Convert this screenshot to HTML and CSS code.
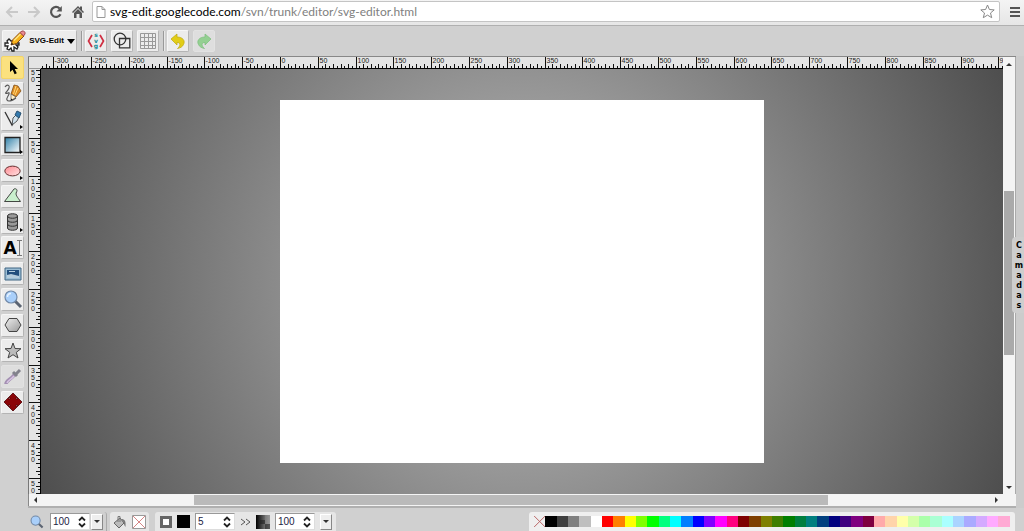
FILE: index.html
```html
<!DOCTYPE html>
<html lang="pt">
<head>
<meta charset="utf-8">
<title>SVG-Edit</title>
<link rel="stylesheet" href="styles.css">
</head>
<body>
<header class="browser-bar">
  <button class="nav-btn" aria-label="Back"><svg width="14" height="12" viewBox="0 0 14 12" fill="none" stroke="#c9c9c9" stroke-width="2"><path d="M13 6H2M7 1L2 6l5 5"/></svg></button>
  <button class="nav-btn" aria-label="Forward"><svg width="14" height="12" viewBox="0 0 14 12" fill="none" stroke="#c9c9c9" stroke-width="2"><path d="M1 6h11M7 1l5 5-5 5"/></svg></button>
  <button class="nav-btn" aria-label="Reload"><svg width="14" height="14" viewBox="0 0 14 14"><path d="M11.5 9.2A5 5 0 1 1 10.6 3.4" fill="none" stroke="#555" stroke-width="2.2"/><path d="M12.8 1v5.4H7.4z" fill="#555"/></svg></button>
  <button class="nav-btn" aria-label="Home"><svg width="14" height="14" viewBox="0 0 14 14"><path d="M7 1L1 7l1 1 5-5 5 5 1-1-2-2V1.500H9V3z" fill="#555"/><path d="M3 8l4-4 4 4v5H8.500V9h-3v4H3z" fill="#555"/></svg></button>
  <form class="address">
    <svg width="10" height="12" viewBox="0 0 10 12" fill="#fff" stroke="#999"><path d="M1 .5h5l3 3v8H1zM6 .5v3h3"/></svg>
    <div class="url" role="textbox" aria-label="Address" contenteditable="true">svg-edit.googlecode.com<span class="url-path">/svn/trunk/editor/svg-editor.html</span></div>
    <svg width="15" height="15" viewBox="0 0 15 15" fill="#fff" stroke="#888"><path d="M7.500 1l1.900 4.500 4.800.4-3.700 3.100 1.200 4.700-4.200-2.600-4.200 2.600 1.200-4.700L.8 5.900l4.800-.4z"/></svg>
  </form>
  <button class="nav-btn menu-btn" aria-label="Menu"><svg width="10" height="10" viewBox="0 0 10 10" fill="#555"><path d="M0 0h10v2H0zM0 4h10v2H0zM0 8h10v2H0z"/></svg></button>
</header>

<div class="top-tools">
  <button class="tool main-menu">
    <svg width="22" height="22" viewBox="0 0 22 22"><g fill="#fff" stroke="#222" stroke-width="1.300"><path d="M7 11L5 9 3 11l1 2H1v3h3l-1 3 2 1 2-2 1 3h2v-4l3 2 1-2-2-2h3v-2h-4l1-2z"/></g><path d="M7 15l1.500-5L16 2.500l4 3.500-7.500 7.500z" fill="#f6b21b" stroke="#8d4a12"/><path d="M16 2.500L18 1c2-.3 3.500 1 3 3l-1.500 2z" fill="#e98a91" stroke="#a2474e"/><path d="M10 10.500L16.500 4" stroke="#ffe786" stroke-width="1.500"/><path d="M7 15l.7-2.500 1.800 1.700z" fill="#222"/></svg>
    <span>SVG-Edit</span>
    <svg width="8" height="5" viewBox="0 0 8 5"><path d="M0 0h8L4 5z"/></svg>
  </button>
  <span class="separator"></span>
  <button class="tool" aria-label="Edit source"><svg width="18" height="18" viewBox="0 0 18 18"><path d="M5 3L1.500 9 5 15M13 3l3.500 6-3.500 6" fill="none" stroke="#cf2f42" stroke-width="1.700"/><g class="source-letters"><text x="9" y="5">s</text><text x="9" y="11">v</text><text x="9" y="16">g</text></g></svg></button>
  <button class="tool" aria-label="Wireframe"><svg width="18" height="18" viewBox="0 0 18 18" fill="none" stroke="#333" stroke-width="1.300"><circle cx="7" cy="7" r="5.800"/><path d="M6.500 6.500h10.300v9.300H6.500z"/></svg></button>
  <button class="tool" aria-label="Grid"><svg width="18" height="18" viewBox="0 0 18 18" fill="none" stroke="#999"><path d="M1.500 1.500h15v15h-15zM1.500 5.500h15M1.500 9.500h15M1.500 13.500h15M5.500 1.500v15M9.500 1.500v15M13.500 1.500v15"/></svg></button>
  <span class="separator"></span>
  <button class="tool" aria-label="Undo"><svg width="18" height="18" viewBox="0 0 18 18"><path d="M2 7l6-5v3c6 0 8.500 4 6.500 7.500C13.500 15 11 16 8.500 16.500c2.500-2 4-6-.5-6V13z" fill="#e2cd17" stroke="#bda80b" stroke-width=".7"/></svg></button>
  <button class="tool disabled" aria-label="Redo" disabled><svg width="18" height="18" viewBox="0 0 18 18"><path d="M16 7l-6-5v3C4 5 1.500 9 3.500 12.500 4.500 15 7 16 9.500 16.500c-2.500-2-4-6 .5-6V13z" fill="#94d092" stroke="#7bbd7b" stroke-width=".7"/></svg></button>
</div>

<main class="editor">
  <nav class="tools-left" aria-label="Tools">
    <button class="tool active" aria-label="Select"><svg width="20" height="20" viewBox="0 0 20 20"><path d="M7 3v11l2.600-2.200 2 4.500 2.200-1-2.100-4.300H15z"/></svg></button>
    <button class="tool" aria-label="Pencil"><svg width="20" height="20" viewBox="0 0 20 20"><path d="M8 11l3-9 4 1 3 5-5 6z" fill="#df8d22" stroke="#80501a" stroke-width=".8"/><path d="M13 3l-2.500 8M15 5l-3 7" stroke="#ffda7b"/><path d="M8 11l5 3-5 4z" fill="#fff0c8" stroke="#444" stroke-width=".6"/><path d="M8 18v-2.500l1.800 1.200z"/><path d="M2 4c2-3 5-2 4 1S1.500 10 3 10.500 7 8 6 11s-3 4-2 6 5 1 9-2" fill="none" stroke="#555" stroke-width="1.100"/></svg></button>
    <button class="tool flyout" aria-label="Path"><svg width="20" height="20" viewBox="0 0 20 20"><path d="M2 3l7 13 4-8" fill="none" stroke="#333" stroke-width="1.300"/><path d="M9 16l1-7 3-3 3 2-2 4z" fill="#d2e3ed" stroke="#333" stroke-width=".8"/><path d="M12 6l2-4 4 2-2 5z" fill="#347aae" stroke="#285170"/></svg></button>
    <button class="tool flyout" aria-label="Rectangle"><svg width="20" height="20" viewBox="0 0 20 20"><defs><linearGradient id="blue" x2="1" y2="1"><stop stop-color="#2f80a8"/><stop offset="1" stop-color="#fff"/></linearGradient></defs><path d="M2 2.500h15v15H2z" fill="url(#blue)" stroke="#222" stroke-width="1.300"/></svg></button>
    <button class="tool flyout" aria-label="Ellipse"><svg width="20" height="20" viewBox="0 0 20 20"><defs><linearGradient id="pink" x2="1" y2="1"><stop stop-color="#ff8a91"/><stop offset="1" stop-color="#ffe3e4"/></linearGradient></defs><ellipse cx="9.500" cy="10" rx="7.700" ry="4.900" fill="url(#pink)" stroke="#633"/></svg></button>
    <button class="tool" aria-label="Polygon path"><svg width="20" height="20" viewBox="0 0 20 20"><path d="M1.500 15.500L11 3c2-1 4 1 2.500 3-1.500 3 1 5 4 9.500z" fill="#c9efcd" stroke="#424742"/></svg></button>
    <button class="tool flyout" aria-label="Shape library"><svg width="20" height="20" viewBox="0 0 20 20"><path d="M4.500 4v12c0 3 10 3 10 0V4c0-3-10-3-10 0z" fill="#999" stroke="#333"/><path d="M4.500 4c0 3 10 3 10 0M4.500 8c0 3 10 3 10 0M4.500 12c0 3 10 3 10 0" fill="none" stroke="#333"/></svg></button>
    <button class="tool" aria-label="Text"><span class="text-icon">A</span><svg width="5" height="16" viewBox="0 0 5 16" fill="none" stroke="#777"><path d="M0 .5h5M2.500 .5v15M0 15.500h5"/></svg></button>
    <button class="tool" aria-label="Image"><svg width="20" height="20" viewBox="0 0 20 20"><path d="M2 4h16v12H2z" fill="#9bbdd4" stroke="#416784"/><path d="M4 6h12v8H4z" fill="#234f7d"/><path d="M4 11l4-1 8 2v2H4zM6 7h6v1H6z" fill="#b6cddd"/></svg></button>
    <button class="tool" aria-label="Zoom"><svg width="20" height="20" viewBox="0 0 20 20"><path d="M12 12l6 6" stroke="#5b6472" stroke-width="3"/><circle cx="8" cy="8" r="6" fill="#a9cffa" stroke="#7189a8" stroke-width="1.200"/><path d="M4.500 8c0-2 1.500-3.500 3.500-3.500" fill="none" stroke="#e5f2ff" stroke-width="1.500"/></svg></button>
    <button class="tool" aria-label="Polygon"><svg width="20" height="20" viewBox="0 0 20 20"><defs><linearGradient id="gray" x2="1" y2="1"><stop stop-color="#eee"/><stop offset="1" stop-color="#999"/></linearGradient></defs><path d="M6 3.500h8l4 6.500-4 6.500H6L2 10z" fill="url(#gray)" stroke="#444"/></svg></button>
    <button class="tool" aria-label="Star"><svg width="20" height="20" viewBox="0 0 20 20"><path d="M10 2l2 5.500 6 .2-4.700 3.600L15 17l-5-3.300L5 17l1.700-5.700L2 7.700l6-.2z" fill="#bbb" stroke="#444"/></svg></button>
    <button class="tool disabled" aria-label="Eyedropper" disabled><svg width="20" height="20" viewBox="0 0 20 20"><path d="M3 17c0-4 5-4 9-10" fill="none" stroke="#a490b3" stroke-width="3.500"/><path d="M4 16c1-3 4-3 7-7" fill="none" stroke="#d7c4e2" stroke-width="1.500"/><path d="M10 5l4 4M13 7l4-4" stroke="#82828c" stroke-width="3"/></svg></button>
    <button class="tool" aria-label="Move"><svg width="20" height="20" viewBox="0 0 20 20"><path d="M10 1l4.500 4.500H13V7h1.500V5.500L19 10l-4.500 4.500V13H13v1.500h1.500L10 19l-4.500-4.500H7V13H5.500v1.500L1 10l4.500-4.500V7H7V5.500H5.500z" fill="#8b0508" stroke="#510306" stroke-width=".8"/></svg></button>
  </nav>

  <section class="workspace">
    <div class="ruler-corner"></div>
    <svg class="ruler ruler-x" aria-hidden="true"></svg>
    <svg class="ruler ruler-y" aria-hidden="true"></svg>
    <div class="stage"><div class="page"></div></div>
    <div class="scroll scroll-y"><i class="arrow up"></i><div class="track"><div class="thumb"></div></div><i class="arrow down"></i></div>
    <div class="scroll scroll-x"><i class="arrow left"></i><div class="track"><div class="thumb"></div></div><i class="arrow right"></i></div>
  </section>

  <aside class="side"><button class="layers-tab"><span>C</span><span>a</span><span>m</span><span>a</span><span>d</span><span>a</span><span>s</span></button></aside>
</main>

<footer class="bottom">
  <div class="group zoom-group">
    <label for="zoom" aria-label="Zoom"><svg width="14" height="14" viewBox="0 0 20 20"><path d="M12 12l6 6" stroke="#5b6472" stroke-width="3"/><circle cx="8" cy="8" r="6.500" fill="#a9cffa" stroke="#7189a8" stroke-width="1.500"/></svg></label>
    <div class="spin"><input id="zoom" value="100"><svg width="8" height="12" viewBox="0 0 8 12" fill="none" stroke="#222" stroke-width="1.800"><path d="M1 4.500l3-3 3 3M1 7.500l3 3 3-3"/></svg></div>
    <button class="drop" aria-label="Zoom levels"><i class="arrow down"></i></button>
  </div>
  <div class="group fill-group">
    <svg width="14" height="14" viewBox="0 0 14 14"><path d="M1 8l6-5 4 5-5 5z" fill="#bbb" stroke="#666"/><path d="M5 7V1.500h2V7" fill="none" stroke="#777"/><path d="M8 4c4 0 5 2 4.500 8-1-1-1.500-3-2-5z" fill="#777"/></svg>
    <button class="paint" aria-label="Fill colour"><svg width="14" height="14" viewBox="0 0 14 14"><path d="M.5 .5h13v13H.5z" fill="#fff" stroke="#999"/><path d="M1 1l12 12M13 1L1 13" stroke="#c66" stroke-width=".8"/></svg></button>
  </div>
  <div class="group stroke-group">
    <svg width="12" height="12" viewBox="0 0 12 12"><path d="M1.500 1.500h9v9h-9z" fill="#fff" stroke="#666" stroke-width="3"/></svg>
    <button class="paint black" aria-label="Stroke colour"></button>
    <div class="spin"><input aria-label="Stroke width" value="5"><svg width="8" height="12" viewBox="0 0 8 12" fill="none" stroke="#222" stroke-width="1.800"><path d="M1 4.500l3-3 3 3M1 7.500l3 3 3-3"/></svg></div>
    <button class="paint more" aria-label="More stroke options"><svg width="11" height="8" viewBox="0 0 11 8" fill="none" stroke="#555"><path d="M1 1l4 3-4 3M6 1l4 3-4 3"/></svg></button>
    <svg width="14" height="14" viewBox="0 0 14 14"><defs><linearGradient id="opacity" x2="1" y2="0"><stop stop-color="#000"/><stop offset="1" stop-color="#aaa"/></linearGradient></defs><path d="M0 0h14v14H0z" fill="url(#opacity)"/><path d="M5 0h9v5H9V0zM9 5h5v5H9z" fill="#888" fill-opacity=".5"/><path d="M4 5h5v4H4zM9 9h5v5H9z" fill="#222" fill-opacity=".6"/></svg>
    <div class="spin"><input aria-label="Opacity" value="100"><svg width="8" height="12" viewBox="0 0 8 12" fill="none" stroke="#222" stroke-width="1.800"><path d="M1 4.500l3-3 3 3M1 7.500l3 3 3-3"/></svg></div>
    <button class="drop" aria-label="Opacity levels"><i class="arrow down"></i></button>
  </div>
  <div class="palette" aria-label="Palette"></div>
</footer>
<script src="editor.js"></script>
</body>
</html>
```
FILE: styles.css
```css
* { box-sizing: border-box; }
body {
  margin: 0;
  height: 100vh;
  display: flex;
  flex-direction: column;
  overflow: hidden;
  background: #d0d0d0;
  color: #000;
  font-family: "DejaVu Sans", sans-serif;
}
button { font: inherit; color: inherit; padding: 0; border: 0; background: none; }
svg { flex: none; }

.browser-bar {
  display: flex;
  align-items: center;
  gap: 8px;
  height: 26px;
  padding: 0 4px 2px 5px;
  background: linear-gradient(#f4f4f4, #e6e6e6);
  border-bottom: 1px solid #b0b0b0;
}
.nav-btn { display: flex; }
.address {
  flex: 1;
  display: flex;
  align-items: center;
  gap: 4px;
  height: 21px;
  margin-left: -1px;
  padding: 0 4px 0 3px;
  background: #fff;
  border: 1px solid #c4c4c4;
  border-radius: 2px;
}
.url { flex: 1; font: 12px/16px Lato, "Open Sans", sans-serif; white-space: nowrap; }
.url-path { color: #808080; }
.menu-btn { padding: 0 0 0 2px; }

.top-tools { display: flex; align-items: center; gap: 4px; height: 30px; padding: 0 2px; }
.tool {
  display: flex;
  align-items: center;
  justify-content: center;
  flex: none;
  width: 22px;
  height: 22px;
  background: #ececec;
  border: 1px solid #f6f6f6;
  border-right-color: #b4b4b4;
  border-bottom-color: #b4b4b4;
  border-radius: 2px;
}
.top-tools .main-menu {
  width: 75px;
  gap: 3px;
  font: bold 8px/12px "Liberation Sans", sans-serif;
  white-space: nowrap;
}
.separator {
  width: 2px;
  height: 20px;
  margin-right: -2px;
  border-left: 1px solid #999;
  border-right: 1px solid #e8e8e8;
}
.source-letters { font: bold 6px "DejaVu Sans", sans-serif; fill: #168a96; text-anchor: middle; }
.disabled { background: #dedede; border-color: #e2e2e2; }

.editor { flex: 1; display: flex; min-height: 0; }
.tools-left {
  display: flex;
  flex-direction: column;
  justify-content: space-between;
  width: 28px;
  height: 358px;
  padding: 0 1px;
}
.tools-left .tool { width: 23px; height: 23px; position: relative; }
.tools-left .active { background: #fbe17f; border-color: #f4d568; }
.flyout::after {
  content: "";
  position: absolute;
  right: 0;
  bottom: 1px;
  border: 2px solid transparent;
  border-left: 3px solid #000;
  border-right: 0;
}
.text-icon { font: bold 17px/20px "DejaVu Sans", sans-serif; }

.workspace {
  flex: 1;
  display: grid;
  grid-template-columns: 13px 1fr 13px;
  grid-template-rows: 12px 1fr 12px;
  min-width: 0;
  background: #f4f4f4;
  border-bottom: 2px solid #b0b0b0;
  border-top: 1px solid #888;
}
.ruler-corner, .ruler { background: #e4e4e4; }
.ruler-corner, .ruler-y { border-left: 1px solid #777; }
.ruler-corner { border-bottom: 1px solid #999; }
.ruler { width: 100%; height: 100%; min-width: 0; min-height: 0; overflow: hidden; }
.ruler-x { border-bottom: 1px solid #000; }
.ruler-y { grid-row: 2; border-right: 1px solid #000; }
.ruler text { font: 7px "Liberation Sans", sans-serif; fill: #222; }
.ruler path { stroke: #111; stroke-width: 1px; shape-rendering: crispEdges; }
.stage {
  grid-row: 2;
  grid-column: 2;
  display: flex;
  align-items: center;
  justify-content: center;
  min-width: 0;
  min-height: 0;
  background: radial-gradient(circle farthest-corner, #c0c0c0, #4e4e4e);
}
.page { width: 50.3%; aspect-ratio: 4 / 3; background: #fff; }

.scroll { display: flex; align-items: center; background: #f4f4f4; }
.scroll-y { grid-column: 3; grid-row: 1 / 3; flex-direction: column; padding: 6px 1px 5px; border-right: 1px solid #aaa; }
.scroll-x { grid-column: 1 / 3; grid-row: 3; padding: 1px 5px; border-left: 1px solid #888; }
.track { flex: 1; display: flex; align-self: stretch; }
.track::before, .track::after { content: ""; }
.scroll-y .track { flex-direction: column; }
.scroll-x .track::before { flex: 157; }
.scroll-x .thumb { flex: 635; background: #bababa; }
.scroll-x .track::after { flex: 167; }
.scroll-y .track::before { flex: 125; }
.scroll-y .thumb { flex: 165; background: #aaa; }
.scroll-y .track::after { flex: 131; }
.arrow { display: block; border: 3px solid transparent; }
.arrow.up { border-bottom-color: #333; border-top: 0; }
.arrow.down { border-top-color: #333; border-bottom: 0; }
.arrow.left { border-right-color: #333; border-left: 0; }
.arrow.right { border-left-color: #333; border-right: 0; }

.side {
  width: 8px;
  display: flex;
  align-items: center;
  justify-content: flex-end;
  padding-bottom: 14px;
  background: #ccc;
}
.layers-tab {
  flex: none;
  display: flex;
  flex-direction: column;
  align-items: center;
  width: 12px;
  padding: 4px 0 2px 2px;
  position: relative;
  background: #cecece;
  border-radius: 4px 0 0 4px;
  font: bold 8px/10px "DejaVu Sans", sans-serif;
}

.bottom { display: flex; height: 23px; padding: 4px 9px 0 28px; align-items: stretch; }
.group { display: flex; align-items: center; background: #e6e6e6; border-radius: 3px 3px 0 0; }
.zoom-group { width: 79px; gap: 6px; padding-left: 2px; background: none; border-right: 1px solid #aaa; }
.zoom-group label { display: flex; }
.fill-group { width: 39px; margin-left: 3px; gap: 5px; padding: 0 3px; }
.stroke-group { width: 181px; margin-left: 6px; gap: 5px; padding-left: 5px; }
.spin {
  display: flex;
  align-items: center;
  flex: none;
  width: 40px;
  height: 17px;
  padding: 0 3px 0 2px;
  background: #fff;
  border: 1px solid #999;
  border-right-color: #ddd;
  border-bottom-color: #ddd;
}
.spin input {
  flex: 1;
  min-width: 0;
  padding: 0;
  border: 0;
  background: none;
  color: #224;
  font: 10px/14px "Liberation Sans", sans-serif;
}
.drop {
  display: flex;
  align-items: center;
  justify-content: center;
  flex: none;
  width: 12px;
  height: 16px;
  background: #eee;
  border: 1px solid #fff;
  border-right-color: #888;
  border-bottom-color: #888;
}
.zoom-group .drop { margin-left: -5px; }
.paint { display: flex; flex: none; }
.paint.black { width: 13px; height: 13px; background: #000; }
.palette {
  display: flex;
  width: 486px;
  margin-left: auto;
  padding: 4px 5px;
  background: #efefef;
  border-radius: 3px 3px 0 0;
}
.swatch { flex: 1; height: 11px; }
.swatch svg { display: block; width: 100%; height: 100%; }
```
FILE: editor.js
```js
const SVG_NS = "http://www.w3.org/2000/svg";
const PAGE_WIDTH = 640;
const palette = `000000 3f3f3f 7f7f7f bfbfbf ffffff
ff0000 ff7f00 ffff00 7fff00 00ff00 00ff7f 00ffff 007fff 0000ff 7f00ff ff00ff ff007f
7f0000 7f3f00 7f7f00 3f7f00 007f00 007f3f 007f7f 003f7f 00007f 3f007f 7f007f 7f003f
ffaaaa ffd4aa ffffaa d4ffaa aaffaa aaffd4 aaffff aad4ff aaaaff d4aaff ffaaff ffaad4`.split(/\s+/);

const holder = document.querySelector(".palette");
holder.innerHTML = '<button class="swatch" aria-label="No colour"><svg viewBox="0 0 11 11"><path d="M0 0l11 11M11 0L0 11" stroke="#b66"/></svg></button>' +
  palette.map(c => `<button class="swatch" aria-label="#${c}" style="background:#${c}"></button>`).join("");

function addText(ruler, x, y, value) {
  const node = document.createElementNS(SVG_NS, "text");
  node.setAttribute("x", x);
  node.setAttribute("y", y);
  node.textContent = value;
  ruler.append(node);
}

function drawRuler(ruler, vertical) {
  const page = document.querySelector(".page").getBoundingClientRect();
  const box = ruler.getBoundingClientRect();
  const scale = page.width / PAGE_WIDTH;
  const origin = vertical ? page.top - box.top : page.left - box.left;
  const length = vertical ? box.height : box.width;
  const first = Math.ceil(-origin / scale / 5) - (vertical ? 2 : 0);
  const last = Math.floor((length - origin) / scale / 5);
  let d = "";
  ruler.replaceChildren();
  for (let i = first; i <= last; i++) {
    const at = Math.round(origin + i * 5 * scale) + 0.5;
    const start = i % 10 === 0 ? 0 : i % 2 ? 9 : 7;
    d += vertical ? `M${start} ${at}H13` : `M${at} ${start}V13`;
    if (i % 10 !== 0) continue;
    if (vertical) {
      const top = Math.max(at + 7, 6);
      String(Math.abs(i * 5)).split("").forEach((c, n) => addText(ruler, 2, top + n * 7, c));
    } else {
      addText(ruler, at + 1, 6, i * 5);
    }
  }
  const ticks = document.createElementNS(SVG_NS, "path");
  ticks.setAttribute("d", d);
  ruler.append(ticks);
}

function drawRulers() {
  drawRuler(document.querySelector(".ruler-x"), false);
  drawRuler(document.querySelector(".ruler-y"), true);
}
drawRulers();
addEventListener("resize", drawRulers);
```
